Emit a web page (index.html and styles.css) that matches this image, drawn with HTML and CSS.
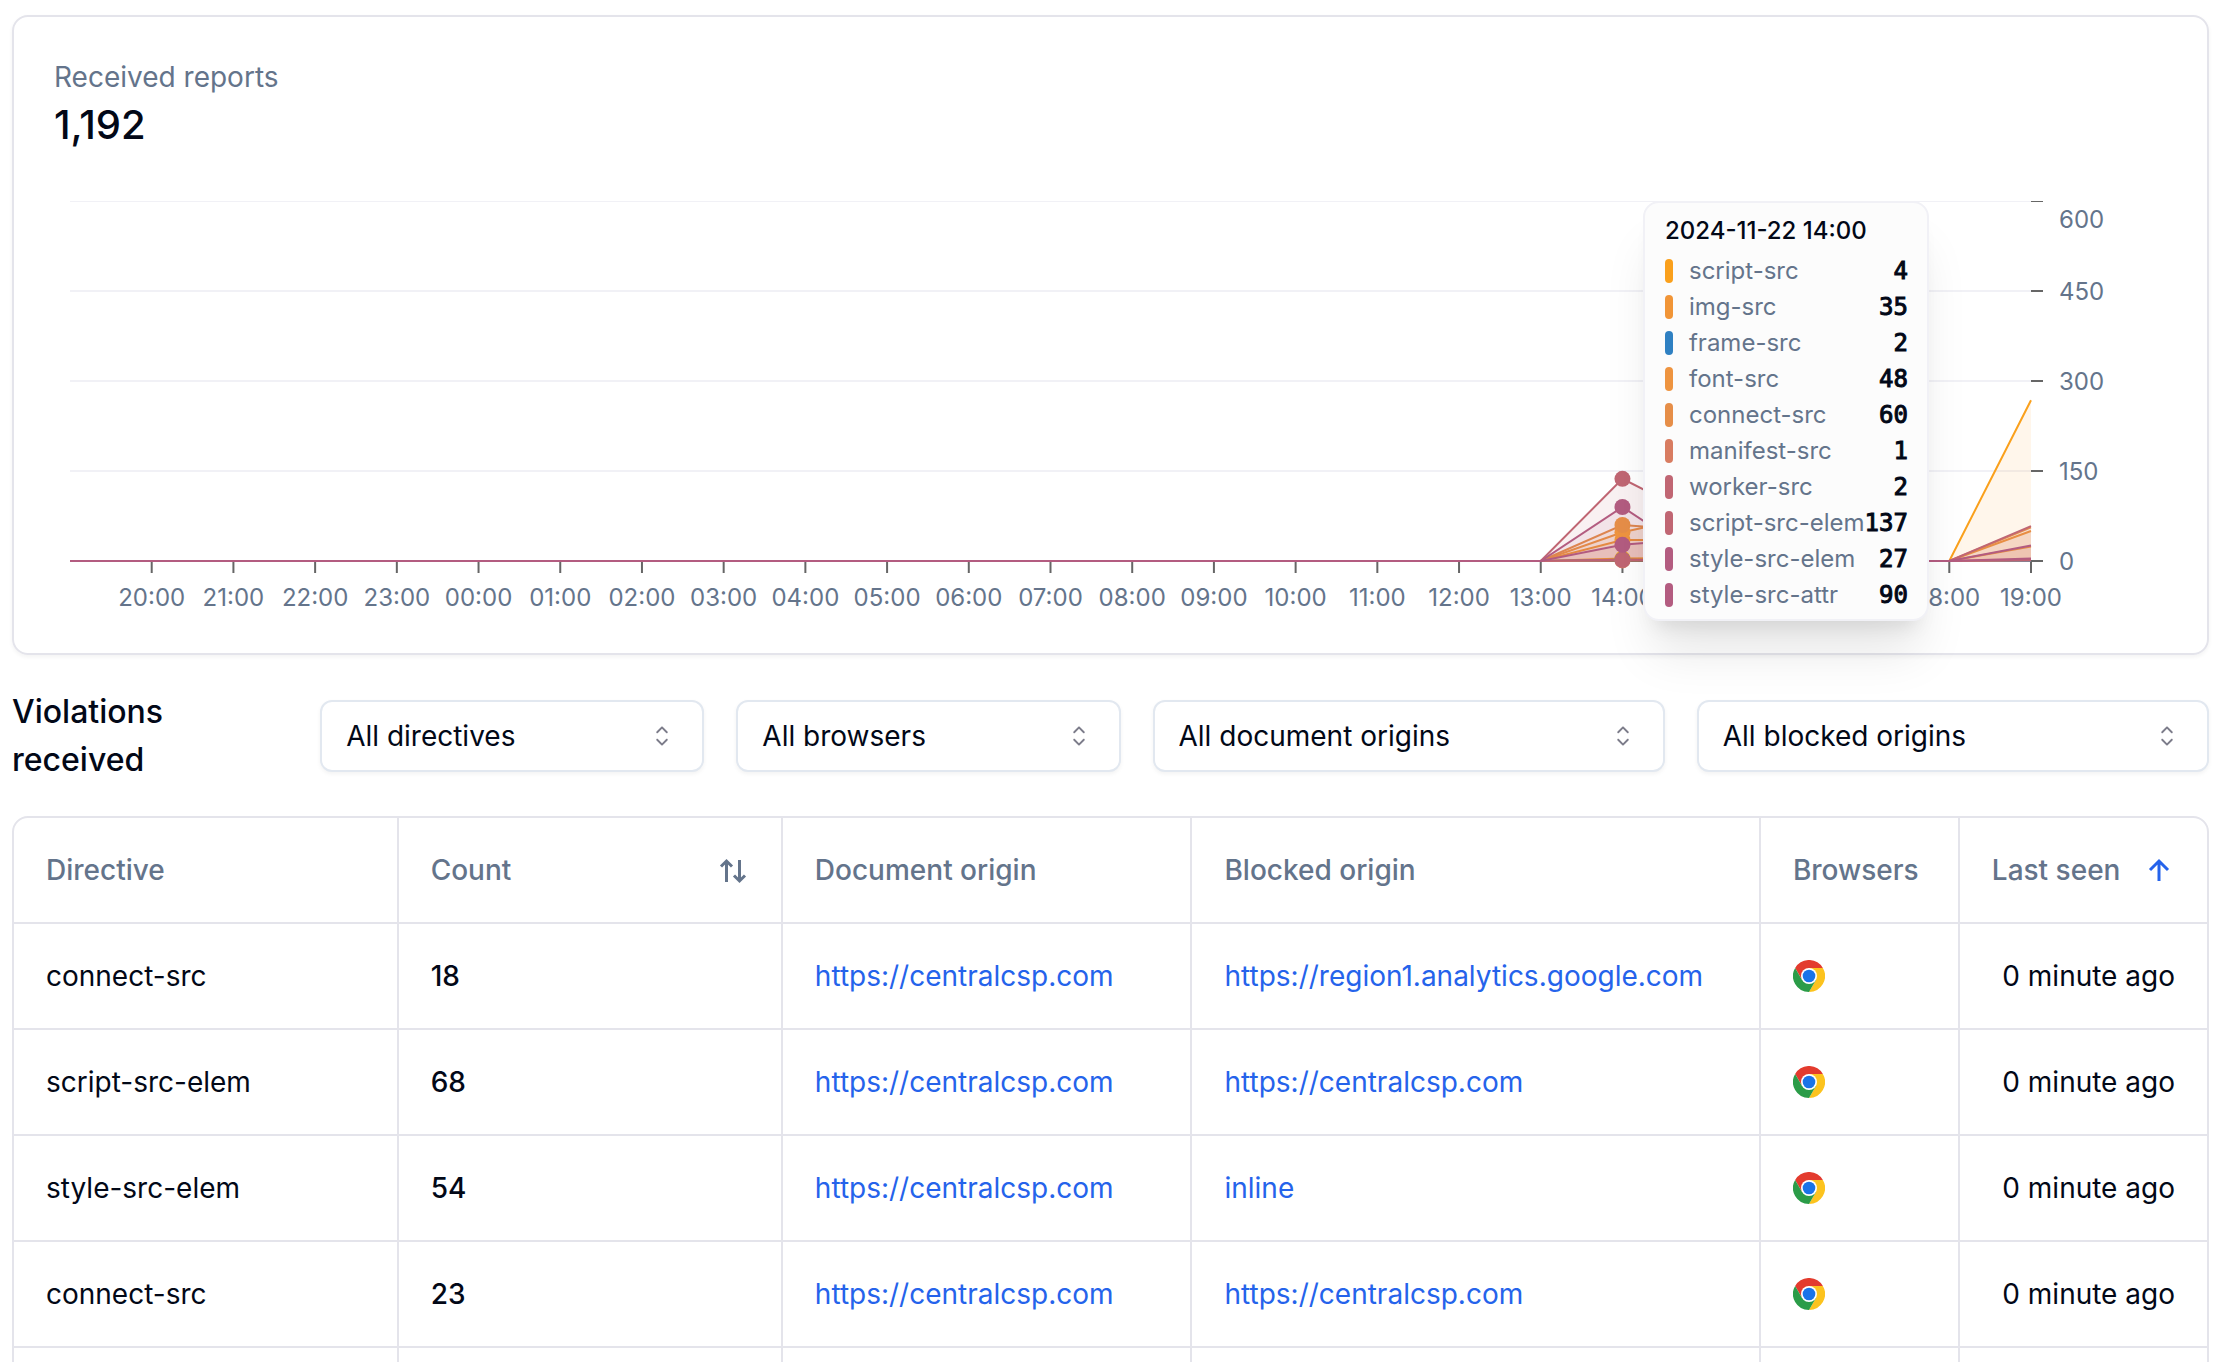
FILE: index.html
```html
<!DOCTYPE html>
<html lang="en">
<head>
<meta charset="utf-8">
<title>Violations</title>
<link rel="stylesheet" href="styles.css">
</head>
<body>
<svg class="sprite" aria-hidden="true">
  <symbol id="chevrons" viewBox="0 0 15 15">
    <path fill="currentColor" fill-rule="evenodd" clip-rule="evenodd" d="M4.93179 5.43179C4.75605 5.60753 4.75605 5.89245 4.93179 6.06819C5.10753 6.24392 5.39245 6.24392 5.56819 6.06819L7.49999 4.13638L9.43179 6.06819C9.60753 6.24392 9.89245 6.24392 10.0682 6.06819C10.2439 5.89245 10.2439 5.60753 10.0682 5.43179L7.81819 3.18179C7.73379 3.0974 7.61933 3.04999 7.49999 3.04999C7.38064 3.04999 7.26618 3.0974 7.18179 3.18179L4.93179 5.43179ZM10.0682 9.56819C10.2439 9.39245 10.2439 9.10753 10.0682 8.93179C9.89245 8.75606 9.60753 8.75606 9.43179 8.93179L7.49999 10.8636L5.56819 8.93179C5.39245 8.75606 5.10753 8.75606 4.93179 8.93179C4.75605 9.10753 4.75605 9.39245 4.93179 9.56819L7.18179 11.8182C7.35753 11.9939 7.64245 11.9939 7.81819 11.8182L10.0682 9.56819Z"/>
  </symbol>
  <symbol id="chrome" viewBox="0 0 48 48">
    <path fill="#e33b2e" d="M24 12h20.8A24 24 0 0 0 3.2 12L13.6 30z"/>
    <path fill="#fcc31e" d="M34.4 30 24 48A24 24 0 0 0 44.8 12H24z"/>
    <path fill="#2b9c48" d="M13.6 30 3.2 12A24 24 0 0 0 24 48l10.4-18z"/>
    <circle cx="24" cy="24" r="12" fill="#fff"/>
    <circle cx="24" cy="24" r="9.5" fill="#1a73e8"/>
  </symbol>
</svg>
<main class="page">
  <section class="card">
    <p class="card-label">Received reports</p>
    <p class="card-total">1,192</p>
    <div class="chart" id="chart">
      <svg class="plot" viewBox="0 0 2113 412" role="img" aria-label="Received reports per hour" id="plot"></svg>
      <div class="tooltip">
        <p class="tooltip-title">2024-11-22 14:00</p>
        <ul class="tooltip-list" id="tooltip-list"></ul>
      </div>
    </div>
  </section>

  <div class="filters">
    <h2 class="filters-title">Violations received</h2>
    <div class="select"><select aria-label="Directive"><option>All directives</option></select><svg class="select-icon"><use href="#chevrons"/></svg></div>
    <div class="select"><select aria-label="Browser"><option>All browsers</option></select><svg class="select-icon"><use href="#chevrons"/></svg></div>
    <div class="select"><select aria-label="Document origin"><option>All document origins</option></select><svg class="select-icon"><use href="#chevrons"/></svg></div>
    <div class="select"><select aria-label="Blocked origin"><option>All blocked origins</option></select><svg class="select-icon"><use href="#chevrons"/></svg></div>
  </div>

  <div class="table-wrap">
    <table class="table">
      <colgroup><col class="c-directive"><col class="c-count"><col class="c-document"><col class="c-blocked"><col class="c-browsers"><col class="c-seen"></colgroup>
      <thead>
        <tr>
          <th>Directive</th>
          <th><button class="sort" type="button">Count
            <svg class="sort-icon" viewBox="0 0 32 32"><path d="M4 12.500 9.500 7l5.500 5.500M9.500 7v21M17 21.500l5.500 5.500 5.500-5.500M22.500 27V6"/></svg></button></th>
          <th>Document origin</th>
          <th>Blocked origin</th>
          <th>Browsers</th>
          <th><button class="sort sort-active" type="button">Last seen
            <svg class="sort-icon" viewBox="0 0 32 32"><path d="M7 16l9-9 9 9M16 7v20"/></svg></button></th>
        </tr>
      </thead>
      <tbody>
        <tr><td>connect-src</td><td class="count">18</td><td><a href="#">https://centralcsp.com</a></td><td><a href="#">https://region1.analytics.google.com</a></td><td><svg class="browser" role="img" aria-label="Chrome"><use href="#chrome"/></svg></td><td class="seen">0 minute ago</td></tr>
        <tr><td>script-src-elem</td><td class="count">68</td><td><a href="#">https://centralcsp.com</a></td><td><a href="#">https://centralcsp.com</a></td><td><svg class="browser" role="img" aria-label="Chrome"><use href="#chrome"/></svg></td><td class="seen">0 minute ago</td></tr>
        <tr><td>style-src-elem</td><td class="count">54</td><td><a href="#">https://centralcsp.com</a></td><td><a href="#">inline</a></td><td><svg class="browser" role="img" aria-label="Chrome"><use href="#chrome"/></svg></td><td class="seen">0 minute ago</td></tr>
        <tr><td>connect-src</td><td class="count">23</td><td><a href="#">https://centralcsp.com</a></td><td><a href="#">https://centralcsp.com</a></td><td><svg class="browser" role="img" aria-label="Chrome"><use href="#chrome"/></svg></td><td class="seen">0 minute ago</td></tr>
        <tr><td></td><td></td><td></td><td></td><td></td><td></td></tr>
      </tbody>
    </table>
  </div>
</main>
<script src="chart.js"></script>
</body>
</html>
```
FILE: styles.css
```css
* { box-sizing: border-box; }

body {
  margin: 0;
  background: #fff;
  color: #020817;
  font-family: Inter, "Liberation Sans", sans-serif;
  font-size: 28px;
  line-height: 40px;
}

p, h2, ul { margin: 0; padding: 0; }

.sprite { position: absolute; width: 0; height: 0; }

.page {
  height: 100vh;
  overflow: hidden;
  padding: 15px 17px 0 12px;
}

.card {
  padding: 40px;
  border: 2px solid #e4e4eb;
  border-radius: 16px;
  box-shadow: 0 2px 4px rgba(0, 0, 0, 0.05);
}

.card-label { color: #64748b; }

.card-total {
  font-size: 40px;
  line-height: 56px;
  font-weight: 500;
}

.chart {
  position: relative;
  margin-top: 48px;
}

.plot { display: block; width: 100%; height: auto; }
.plot text { font-size: 24px; fill: #64748b; }
.plot .hour { text-anchor: middle; }
.plot .grid { stroke: #f1f1f6; stroke-width: 2; }
.plot .tick { stroke: #666; stroke-width: 2; }
.plot .line { fill: none; stroke-width: 2; }
.plot .area { fill-opacity: 0.09; }

.tooltip {
  position: absolute;
  top: 0;
  left: 75.2%;
  width: 286px;
  padding: 12px 20px;
  border: 2px solid #f1f1f6;
  border-radius: 16px;
  background: #fcfcfc;
  box-shadow: 0 40px 50px -10px rgba(0, 0, 0, 0.1), 0 16px 20px -12px rgba(0, 0, 0, 0.1);
  font-size: 24px;
}

.tooltip-title { font-weight: 500; line-height: 32px; }

.tooltip-list {
  display: grid;
  gap: 12px;
  margin-top: 12px;
  list-style: none;
  line-height: 24px;
}

.tooltip-list li { display: flex; }
.swatch { width: 8px; height: 24px; margin-right: 16px; border-radius: 4px; }
.name { flex: 1; color: #64748b; white-space: nowrap; }
.value { font-family: "DejaVu Sans Mono", monospace; -webkit-text-stroke: 1px currentColor; }

.filters {
  display: grid;
  grid-template-columns: 276fr 384fr 384fr 512fr 512fr;
  align-items: center;
  gap: 32px;
  margin: 33px 0 32px;
}

.filters-title { font-size: 32px; line-height: 48px; font-weight: 500; padding-right: 96px; }

.select { position: relative; }

.select select {
  display: block;
  width: 100%;
  height: 72px;
  padding: 0 24px;
  border: 2px solid #e2e8f0;
  border-radius: 12px;
  background: #fff;
  box-shadow: 0 2px 4px rgba(0, 0, 0, 0.05);
  color: inherit;
  font: inherit;
  appearance: none;
}

.select-icon {
  position: absolute;
  top: 20px;
  right: 26px;
  width: 32px;
  height: 32px;
  color: #7c7c8a;
  pointer-events: none;
}

.table-wrap {
  overflow: hidden;
  border: 2px solid #e4e4eb;
  border-radius: 16px;
}

.table { width: 100%; table-layout: fixed; border-spacing: 0; }

.c-directive { width: 17.54%; }
.c-count { width: 17.52%; }
.c-document { width: 18.68%; }
.c-blocked { width: 25.92%; }
.c-browsers { width: 9.07%; }

.table th, .table td {
  height: 106px;
  padding: 0 32px;
  border-right: 2px solid #e4e4eb;
  border-bottom: 2px solid #e4e4eb;
  text-align: left;
  white-space: nowrap;
}

.table th:last-child, .table td:last-child { border-right: 0; }
.table th { color: #64748b; font-weight: 500; }
.table .count { font-weight: 500; }
.table .seen { text-align: right; }
.table a { color: #2563eb; text-decoration: none; }

.sort {
  display: flex;
  align-items: center;
  justify-content: space-between;
  width: 100%;
  padding: 0;
  border: 0;
  background: none;
  color: inherit;
  font: inherit;
}

.sort-icon {
  width: 32px;
  height: 32px;
  fill: none;
  stroke: currentColor;
  stroke-width: 3;
}

.sort-active .sort-icon { color: #2563eb; }
.browser { display: block; width: 32px; height: 32px; }
```
FILE: chart.js
```js
const LEFT = 16, RIGHT = 1977, BOTTOM = 360, MAX = 600;
const STEP = (RIGHT - LEFT) / 24;
const x = (i) => LEFT + i * STEP;
const y = (v) => BOTTOM - (v / MAX) * BOTTOM;

// Values for 14:00, 15:00, 16:00 and 19:00; every other hour is zero.
const series = [
  ["script-src", "#faa01c", 4, 5, 0, 268],
  ["img-src", "#f19537", 35, 35, 0, 24],
  ["frame-src", "#2f80c2", 2, 0, 0, 0],
  ["font-src", "#ee9440", 48, 78, 0, 50],
  ["connect-src", "#e68e48", 60, 50, 0, 56],
  ["manifest-src", "#d87c61", 1, 1, 0, 1],
  ["worker-src", "#c06673", 2, 2, 0, 2],
  ["script-src-elem", "#c06673", 137, 68, 0, 58],
  ["style-src-elem", "#b35c80", 27, 38, 0, 26],
  ["style-src-attr", "#b35c80", 90, 0, 0, 4],
];

let out = "";
for (const v of [150, 300, 450, 600]) {
  out += `<line class="grid" x1="${LEFT}" x2="${RIGHT}" y1="${y(v)}" y2="${y(v)}"/>`;
}
out += `<line class="tick" x1="${LEFT}" x2="${RIGHT}" y1="${BOTTOM}" y2="${BOTTOM}"/>`;
for (let i = 1; i <= 24; i++) {
  const hour = String((19 + i) % 24).padStart(2, "0");
  out += `<line class="tick" x1="${x(i)}" x2="${x(i)}" y1="${BOTTOM}" y2="${BOTTOM + 12}"/>`;
  out += `<text class="hour" x="${x(i)}" y="405">${hour}:00</text>`;
}
for (const v of [0, 150, 300, 450, 600]) {
  out += `<line class="tick" x1="${RIGHT}" x2="${RIGHT + 12}" y1="${y(v)}" y2="${y(v)}"/>`;
  out += `<text x="${RIGHT + 28}" y="${v === MAX ? 27 : y(v) + 9}">${v}</text>`;
}
let dots = "";
for (const [name, color, a, b, c, d] of series) {
  const points = [[0, 0], [18, 0], [19, a], [20, b], [21, c], [22, 0], [23, 0], [24, d]]
    .map(([i, v]) => `${x(i)},${y(v)}`).join(" ");
  out += `<polygon class="area" fill="${color}" points="${points} ${RIGHT},${BOTTOM}"/>`;
  out += `<polyline class="line" stroke="${color}" points="${points}"/>`;
  dots += `<circle cx="${x(19)}" cy="${y(a)}" r="8" fill="${color}"/>`;
}
document.getElementById("plot").innerHTML = out + dots;

document.getElementById("tooltip-list").innerHTML = series.map(([name, color, a]) =>
  `<li><span class="swatch" style="background:${color}"></span><span class="name">${name}</span><span class="value">${a}</span></li>`
).join("");
```
